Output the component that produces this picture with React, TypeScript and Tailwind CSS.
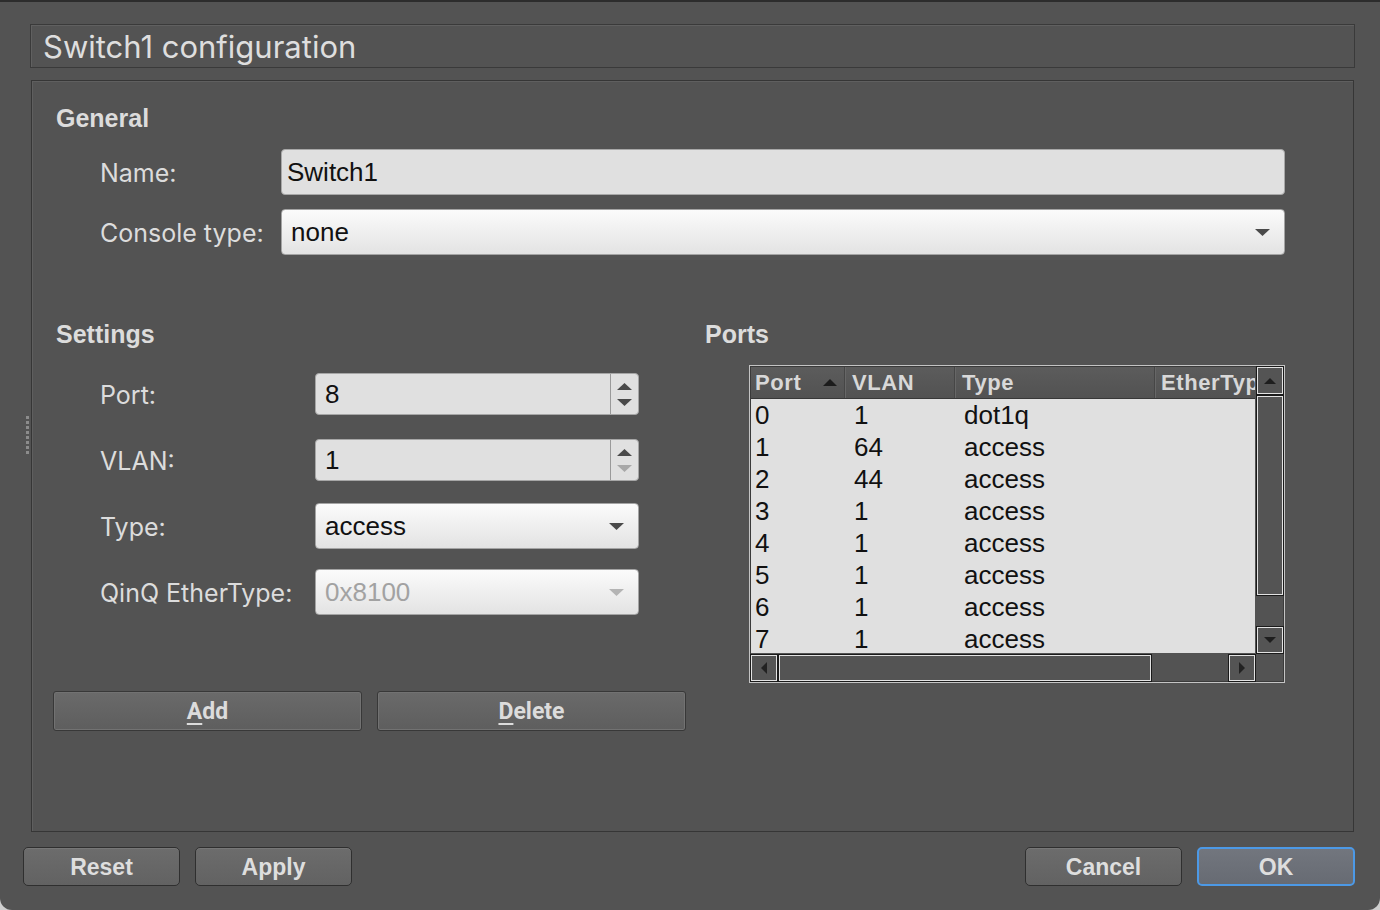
import React from "react";

function DownTri({ color = "#4a4a4a", w = 14, h = 7 }: { color?: string; w?: number; h?: number }) {
  return (
    <svg width={w} height={h} viewBox={`0 0 ${w} ${h}`}>
      <path d={`M0 0H${w}L${w / 2} ${h}Z`} fill={color} />
    </svg>
  );
}
function UpTri({ color = "#4a4a4a", w = 14, h = 7 }: { color?: string; w?: number; h?: number }) {
  return (
    <svg width={w} height={h} viewBox={`0 0 ${w} ${h}`}>
      <path d={`M0 ${h}H${w}L${w / 2} 0Z`} fill={color} />
    </svg>
  );
}
function LeftTri({ color = "#222", w = 6, h = 12 }: { color?: string; w?: number; h?: number }) {
  return (
    <svg width={w} height={h} viewBox={`0 0 ${w} ${h}`}>
      <path d={`M${w} 0V${h}L0 ${h / 2}Z`} fill={color} />
    </svg>
  );
}
function RightTri({ color = "#222", w = 6, h = 12 }: { color?: string; w?: number; h?: number }) {
  return (
    <svg width={w} height={h} viewBox={`0 0 ${w} ${h}`}>
      <path d={`M0 0V${h}L${w} ${h / 2}Z`} fill={color} />
    </svg>
  );
}

function SpinBox({ value, downDisabled }: { value: string; downDisabled?: boolean }) {
  return (
    <div className="w-[324px] h-[42px] rounded-[4px] border border-[#a6a6a6] bg-[#e0e0e0] flex items-stretch">
      <div className="flex-1 flex items-center pl-[9px] text-[26px] text-[#111]">{value}</div>
      <div className="w-[28px] border-l border-[#9a9a9a] flex flex-col items-center justify-center gap-[9px]">
        <UpTri color="#4a4a4a" w={15} h={7} />
        <DownTri color={downDisabled ? "#a8a8a8" : "#4a4a4a"} w={15} h={7} />
      </div>
    </div>
  );
}

function Combo({ value, w, disabled }: { value: string; w: string; disabled?: boolean }) {
  return (
    <div
      className={`${w} h-[46px] rounded-[4px] border border-[#a4a4a4] bg-gradient-to-b from-[#fbfbfb] to-[#e3e3e3] flex items-center justify-between pl-[9px] pr-[14px] text-[26px] ${
        disabled ? "text-[#a2a2a2]" : "text-[#111]"
      }`}
    >
      <span>{value}</span>
      <DownTri color={disabled ? "#b4b4b4" : "#4a4a4a"} w={15} h={7} />
    </div>
  );
}

function SbBtn({ children, className = "" }: { children?: React.ReactNode; className?: string }) {
  return (
    <div
      className={`bg-[#545454] border border-[#e2e2e2] shadow-[0_0_0_1px_#1a1a1a] flex items-center justify-center ${className}`}
    >
      {children}
    </div>
  );
}

function QtButton({ label, w }: { label: string; w: string }) {
  return (
    <div
      className={`${w} h-[40px] rounded-[3px] border border-[#383838] bg-gradient-to-b from-[#6a6a6a] to-[#5e5e5e] shadow-[inset_0_0_0_1px_#727272] flex items-center justify-center pt-[2px] text-[23px] font-bold text-[#dcdcdc] font-['Roboto',sans-serif]`}
    >
      <span>
        <span className="underline underline-offset-[4px] decoration-[2px]">{label[0]}</span>
        {label.slice(1)}
      </span>
    </div>
  );
}

function MacButton({ label, primary }: { label: string; primary?: boolean }) {
  return (
    <div
      className={`h-[39px] rounded-[5px] flex items-center justify-center text-[23px] font-bold text-[#dedede] ${
        primary
          ? "w-[158px] border-2 border-[#4c99e6] bg-gradient-to-b from-[#72767e] to-[#676b73]"
          : "w-[157px] border border-[#2f2f2f] bg-gradient-to-b from-[#6c6c6c] to-[#626262] shadow-[inset_0_1px_0_#777]"
      }`}
    >
      <span className="pt-[2px]">{label}</span>
    </div>
  );
}

const rows = [
  ["0", "1", "dot1q"],
  ["1", "64", "access"],
  ["2", "44", "access"],
  ["3", "1", "access"],
  ["4", "1", "access"],
  ["5", "1", "access"],
  ["6", "1", "access"],
  ["7", "1", "access"],
];

function PortsTable() {
  return (
    <div className="w-[536px] h-[318px] border border-[#c4c4c4] bg-[#3a3a3a] p-px">
      <div className="w-full h-full bg-[#535353] grid grid-cols-[504px_26px] grid-rows-[286px_26px] gap-[2px]">
        {/* main area */}
        <div className="flex flex-col overflow-hidden">
          <div className="h-[32px] flex bg-gradient-to-b from-[#5c5c5c] to-[#525252] border-b border-[#383838] text-[22px] font-bold tracking-[0.6px] text-[#d8d8d8] shrink-0">
            <div className="w-[94px] flex items-center justify-between pl-[4px] pr-[7px] border-r border-[#464646] shadow-[1px_0_0_#676767]">
              <span>Port</span>
              <UpTri color="#1c1c1c" w={14} h={7} />
            </div>
            <div className="w-[110px] flex items-center pl-[7px] border-r border-[#464646] shadow-[1px_0_0_#676767]">VLAN</div>
            <div className="w-[200px] flex items-center pl-[7px] border-r border-[#464646] shadow-[1px_0_0_#676767]">Type</div>
            <div className="flex-1 flex items-center pl-[6px] overflow-hidden whitespace-nowrap">EtherType</div>
          </div>
          <div className="flex-1 bg-[#e0e0e0] overflow-hidden text-[26px] text-[#111]">
            {rows.map((r) => (
              <div key={r[0]} className="h-[32px] flex items-center">
                <div className="w-[94px] pl-[4px]">{r[0]}</div>
                <div className="w-[110px] pl-[9px]">{r[1]}</div>
                <div className="w-[200px] pl-[9px]">{r[2]}</div>
              </div>
            ))}
          </div>
        </div>
        {/* vertical scrollbar */}
        <div className="flex flex-col">
          <SbBtn className="h-[27px]">
            <UpTri color="#1e1e1e" w={12} h={6} />
          </SbBtn>
          <SbBtn className="mt-[2px] h-[199px]" />
          <div className="flex-1" />
          <SbBtn className="h-[26px]">
            <DownTri color="#1e1e1e" w={12} h={6} />
          </SbBtn>
        </div>
        {/* horizontal scrollbar */}
        <div className="flex">
          <SbBtn className="w-[26px]">
            <LeftTri />
          </SbBtn>
          <SbBtn className="ml-[2px] w-[372px]" />
          <div className="flex-1" />
          <SbBtn className="w-[26px]">
            <RightTri />
          </SbBtn>
        </div>
        <div />
      </div>
    </div>
  );
}

const LBL = "pl-[68px] text-[25px] font-['Inter',sans-serif] pt-[3px]";

export default function App() {
  return (
    <div className="w-[1380px] h-[910px] bg-[#cfcfcf] font-['Liberation_Sans',Arial,sans-serif]">
      <div className="w-full h-full bg-[#535353] rounded-b-[12px] border-t-2 border-[#2c2c2c] flex flex-col">
        {/* title */}
        <div className="ml-[30px] mt-[22px] w-[1325px] h-[44px] border border-[#3a3a3a] shadow-[inset_1px_1px_0_#606060] flex items-center pl-[12px] pt-[2px] text-[31px] text-[#dedede] font-['Inter',sans-serif]">
          Switch1 configuration
        </div>

        <div className="mt-[12px] flex">
          {/* splitter gutter */}
          <div className="w-[31px] shrink-0">
            <div className="mt-[336px] ml-[26px] flex flex-col gap-[2px]">
              {[0, 1, 2, 3, 4, 5, 6, 7].map((i) => (
                <div key={i} className="w-[3px] h-[3px] bg-[#8c8c8c]" />
              ))}
            </div>
          </div>

          {/* main frame */}
          <div className="w-[1323px] h-[752px] border border-[#363636] shadow-[inset_1px_1px_0_#5f5f5f] flex flex-col text-[#dcdcdc]">
            <div className="mt-[23px] h-[28px] leading-[28px] pl-[24px] text-[25px] font-bold">General</div>

            <div className="mt-[17px] h-[46px] flex items-center">
              <div className={`${LBL} w-[249px]`}>Name:</div>
              <div className="w-[1004px] h-[46px] rounded-[4px] border border-[#a8a8a8] bg-[#e0e0e0] flex items-center pl-[5px] text-[26px] text-[#111]">
                Switch1
              </div>
            </div>
            <div className="mt-[14px] h-[46px] flex items-center">
              <div className={`${LBL} w-[249px]`}>Console type:</div>
              <Combo value="none" w="w-[1004px]" />
            </div>

            <div className="mt-[65px] h-[28px] leading-[28px] flex text-[25px] font-bold">
              <div className="w-[673px] pl-[24px]">Settings</div>
              <div>Ports</div>
            </div>

            <div className="flex">
              <div className="w-[673px] flex flex-col">
                <div className="mt-[13px] flex flex-col">
                  <div className="h-[66px] flex items-center">
                    <div className={`${LBL} w-[283px]`}>Port:</div>
                    <SpinBox value="8" />
                  </div>
                  <div className="h-[66px] flex items-center">
                    <div className={`${LBL} w-[283px]`}>VLAN:</div>
                    <SpinBox value="1" downDisabled />
                  </div>
                  <div className="h-[66px] flex items-center">
                    <div className={`${LBL} w-[283px]`}>Type:</div>
                    <Combo value="access" w="w-[324px]" />
                  </div>
                  <div className="h-[66px] flex items-center">
                    <div className={`${LBL} w-[283px] whitespace-nowrap`}>QinQ EtherType:</div>
                    <Combo value="0x8100" w="w-[324px]" disabled />
                  </div>
                </div>
                <div className="mt-[66px] pl-[21px] flex gap-[15px]">
                  <QtButton label="Add" w="w-[309px]" />
                  <QtButton label="Delete" w="w-[309px]" />
                </div>
              </div>
              <div className="pl-[44px] pt-[17px]">
                <PortsTable />
              </div>
            </div>
          </div>
        </div>

        {/* bottom buttons */}
        <div className="mt-[15px] flex justify-between pl-[23px] pr-[25px]">
          <div className="flex gap-[15px]">
            <MacButton label="Reset" />
            <MacButton label="Apply" />
          </div>
          <div className="flex gap-[15px]">
            <MacButton label="Cancel" />
            <MacButton label="OK" primary />
          </div>
        </div>
      </div>
    </div>
  );
}
